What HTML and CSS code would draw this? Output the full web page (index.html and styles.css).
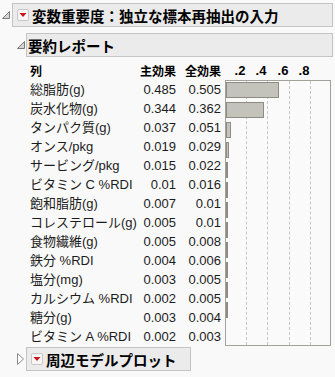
FILE: index.html
```html
<!DOCTYPE html>
<html lang="ja">
<head>
    <meta charset="UTF-8">
    <title>変数重要度</title>
    <link rel="stylesheet" href="styles.css">
</head>
<body>
<div class="report">
    <!-- main outline -->
    <div class="outline-head">
        <svg class="toggle" viewBox="0 0 8 8"><polygon points="7.5,0.5 7.5,7.5 0.5,7.5" fill="#d4d4d4" stroke="#7a7a7a" stroke-width="1"/></svg>
        <div class="head-box wide">
            <span class="menu-btn"><svg viewBox="0 0 10 10"><polygon points="1.5,3 8.5,3 5,7" fill="#d0101a"/></svg></span>
            <span class="head-title">変数重要度：独立な標本再抽出の入力</span>
        </div>
    </div>

    <div class="outline-body">
        <div class="outline-head sub">
            <svg class="toggle" viewBox="0 0 8 8"><polygon points="7.5,0.5 7.5,7.5 0.5,7.5" fill="#d4d4d4" stroke="#7a7a7a" stroke-width="1"/></svg>
            <div class="head-box wide plain">
                <span class="head-title">要約レポート</span>
            </div>
        </div>

        <div class="summary">
            <div class="th">列</div>
            <div class="th num">主効果</div>
            <div class="th num">全効果</div>
            <div class="th axis">
                <span class="tick t1">.2</span>
                <span class="tick t2">.4</span>
                <span class="tick t3">.6</span>
                <span class="tick t4">.8</span>
            </div>

            <div class="chart">
                <div class="grid g1"></div>
                <div class="grid g2"></div>
                <div class="grid g3"></div>
                <div class="grid g4"></div>
                <div class="bar-row"><div class="bar" style="width: 53px"></div></div>
                <div class="bar-row"><div class="bar" style="width: 38px"></div></div>
                <div class="bar-row"><div class="bar" style="width: 5px"></div></div>
                <div class="bar-row"><div class="bar" style="width: 3px"></div></div>
                <div class="bar-row"><div class="bar" style="width: 2px"></div></div>
                <div class="bar-row"><div class="bar" style="width: 2px"></div></div>
                <div class="bar-row"><div class="bar" style="width: 1px"></div></div>
                <div class="bar-row"><div class="bar" style="width: 1px"></div></div>
                <div class="bar-row"><div class="bar" style="width: 1px"></div></div>
                <div class="bar-row"><div class="bar" style="width: 1px"></div></div>
                <div class="bar-row"><div class="bar" style="width: 1px"></div></div>
                <div class="bar-row"><div class="bar" style="width: 1px"></div></div>
                <div class="bar-row"></div>
                <div class="bar-row"></div>
            </div>

            <div>総脂肪(g)</div><div class="num">0.485</div><div class="num">0.505</div>
            <div>炭水化物(g)</div><div class="num">0.344</div><div class="num">0.362</div>
            <div>タンパク質(g)</div><div class="num">0.037</div><div class="num">0.051</div>
            <div>オンス/pkg</div><div class="num">0.019</div><div class="num">0.029</div>
            <div>サービング/pkg</div><div class="num">0.015</div><div class="num">0.022</div>
            <div>ビタミン C %RDI</div><div class="num">0.01</div><div class="num">0.016</div>
            <div>飽和脂肪(g)</div><div class="num">0.007</div><div class="num">0.01</div>
            <div>コレステロール(g)</div><div class="num">0.005</div><div class="num">0.01</div>
            <div>食物繊維(g)</div><div class="num">0.005</div><div class="num">0.008</div>
            <div>鉄分 %RDI</div><div class="num">0.004</div><div class="num">0.006</div>
            <div>塩分(mg)</div><div class="num">0.003</div><div class="num">0.005</div>
            <div>カルシウム %RDI</div><div class="num">0.002</div><div class="num">0.005</div>
            <div>糖分(g)</div><div class="num">0.003</div><div class="num">0.004</div>
            <div>ビタミン A %RDI</div><div class="num">0.002</div><div class="num">0.003</div>
        </div>

        <div class="outline-head closed">
            <svg class="toggle" viewBox="0 0 8 12"><polygon points="0.5,0.5 6.5,6 0.5,11.5" fill="#ffffff" stroke="#8a8a8a" stroke-width="1"/></svg>
            <div class="head-box">
                <span class="menu-btn"><svg viewBox="0 0 10 10"><polygon points="1.5,3 8.5,3 5,7" fill="#d0101a"/></svg></span>
                <span class="head-title">周辺モデルプロット</span>
            </div>
        </div>
    </div>
</div>
</body>
</html>
```

FILE: styles.css
```css
body {
    margin: 0;
    background-color: #f9f9f9;
    font-family: "Liberation Sans", "Noto Sans CJK JP", sans-serif;
    color: #1c1c1c;
}
.report {
    padding: 3px 2px 0 2px;
}
.outline-head {
    display: flex;
    align-items: center;
    gap: 2px;
}
.outline-head.sub {
    margin-top: 6px;
    gap: 1px;
}
.outline-head.closed {
    margin-top: 1px;
    gap: 1px;
}
.toggle {
    width: 8px;
    height: 8px;
    flex: none;
}
.closed .toggle {
    width: 8px;
    height: 12px;
}
.head-box {
    height: 22px;
    border: 1px solid #c4c4c4;
    background-color: #ebebeb;
    display: flex;
    align-items: center;
    gap: 3px;
    padding: 0 13px 0 4px;
}
.head-box.wide {
    flex: 1;
}
.head-box.plain {
    padding-left: 1px;
}
.head-title {
    font-family: "Noto Sans CJK JP", sans-serif;
    font-weight: bold;
    font-size: 14.5px;
    color: #000;
}
.menu-btn {
    width: 10px;
    height: 10px;
    border: 1px solid #c8c8c8;
    border-radius: 2px;
    background-color: #f6f6f6;
    display: flex;
}
.menu-btn svg {
    width: 10px;
    height: 10px;
}
.outline-body {
    padding-left: 15px;
}
.summary {
    display: grid;
    grid-template-columns: 110px 36px 45px 110px;
    grid-auto-rows: 19px;
    margin: 4px 0 0 13px;
    font-size: 13px;
    line-height: 19px;
    white-space: nowrap;
}
.th {
    font-weight: bold;
    font-family: "Noto Sans CJK JP", sans-serif;
    font-size: 12px;
    color: #000;
}
.num {
    text-align: right;
}
.axis {
    position: relative;
    font-family: "Liberation Sans", sans-serif;
    font-size: 13px;
}
.tick {
    position: absolute;
    top: 0;
    width: 20px;
    text-align: center;
}
.t1 { left: 9px; }
.t2 { left: 30px; }
.t3 { left: 52px; }
.t4 { left: 73px; }
.chart {
    grid-column: 4;
    grid-row: 2 / span 14;
    margin-left: 4px;
    width: 106px;
    box-sizing: border-box;
    border: 1px solid #a2a298;
    background-color: #fafafa;
    position: relative;
    overflow: hidden;
}
.grid {
    position: absolute;
    top: 0;
    bottom: 0;
    border-left: 1px dashed #c6c6c6;
}
.g1 { left: 20px; }
.g2 { left: 41px; }
.g3 { left: 63px; }
.g4 { left: 84px; }
.bar-row {
    height: 19px;
    position: relative;
}
.bar {
    margin-top: 1px;
    height: 16px;
    box-sizing: border-box;
    border: 1px solid #8c8c82;
    background-color: #c3c3bb;
}
```
